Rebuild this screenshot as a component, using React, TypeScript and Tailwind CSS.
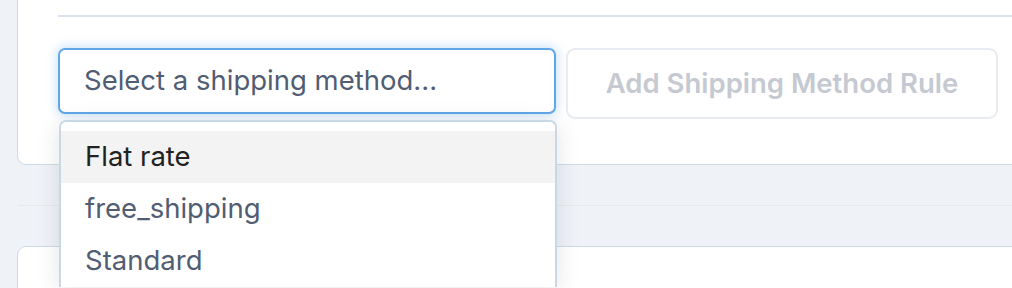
import React from "react";

const options = ["Flat rate", "free_shipping", "Standard"];

export default function App() {
  return (
    <div className="relative h-[288px] w-[1012px] overflow-hidden bg-[#eff3f8] font-['Inter',sans-serif]">
      {/* Top card */}
      <div className="ml-[17px] h-[165px] w-[1100px] rounded-b-[9px] border-x border-b border-[#cddbe7] bg-white pl-[40px]">
        <div className="pt-[15px]">
          <div className="h-[2px] bg-[#d6e2ed]" />
        </div>
        <div className="mt-[31px] flex items-start gap-[10px]">
          <div className="flex h-[66px] w-[498px] items-center rounded-[7px] border-2 border-[#62a6ea] bg-white pl-[24px] text-[27.5px] text-[#515d72] shadow-[0_0_10px_2px_rgba(96,165,240,0.3)]">
            Select a shipping method...
          </div>
          <button className="flex h-[71px] w-[432px] items-center justify-center rounded-[9px] border-2 border-[#e8ebf0] bg-white text-[27.5px] font-semibold text-[#c5c9d1]">
            Add Shipping Method Rule
          </button>
        </div>
      </div>

      {/* gap between cards */}
      <div className="h-[40px]" />
      <div className="ml-[18px] h-px bg-[#ebe8e8]" />
      <div className="h-[40px]" />

      {/* Next card */}
      <div className="ml-[17px] h-[60px] w-[1100px] rounded-t-[9px] border-x border-t border-[#cddbe7] bg-white" />

      {/* Dropdown menu */}
      <div className="absolute left-[59px] top-[120px] w-[498px] rounded-t-[7px] border-2 border-b-0 border-[#c9d8e5] bg-white pt-[9px] shadow-[0_4px_24px_rgba(30,40,60,0.12)]">
        {options.map((o, i) => (
          <div
            key={o}
            className={`flex h-[52px] items-center pl-[24px] text-[27.5px] ${
              i === 0 ? "bg-[#f3f3f3] text-[#222222]" : "text-[#515d72]"
            }`}
          >
            {o}
          </div>
        ))}
      </div>
    </div>
  );
}
